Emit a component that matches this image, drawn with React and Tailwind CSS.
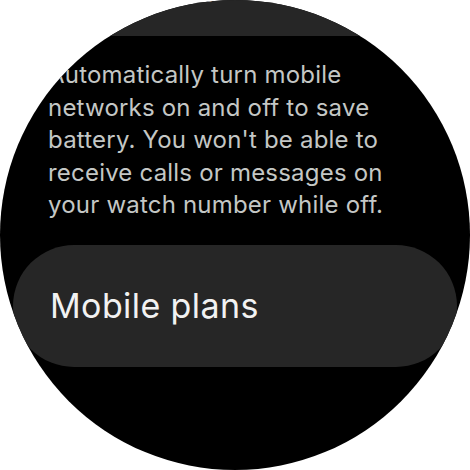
export default function App() {
  const lines = [
    "Automatically turn mobile",
    "networks on and off to save",
    "battery. You won't be able to",
    "receive calls or messages on",
    "your watch number while off.",
  ];

  return (
    <div className="w-[470px] h-[470px] bg-white" style={{ fontFamily: "Inter, Roboto, sans-serif" }}>
      <div className="w-[470px] h-[470px] rounded-full bg-black overflow-hidden flex flex-col">
        {/* previous card, scrolled mostly off screen */}
        <div className="h-[36px] shrink-0 bg-[#262626] flex items-start">
          <span className="pl-[66px] mt-[-27px] text-[24px] leading-[32px] text-[#e3e3e3] whitespace-nowrap">
            Automatically
          </span>
        </div>

        <p className="mt-[23px] pl-[48px] text-[24px] leading-[32.5px] tracking-[0.2px] text-[#c4c7c5]">
          {lines.map((l) => (
            <span key={l} className="block whitespace-nowrap">
              {l}
            </span>
          ))}
        </p>

        <button className="mt-[23px] mx-[13px] h-[122px] shrink-0 rounded-full bg-[#262626] pl-[37px] flex items-center text-left">
          <span className="text-[34px] tracking-[0.4px] text-[#f2f2f2]">Mobile plans</span>
        </button>
      </div>
    </div>
  );
}
